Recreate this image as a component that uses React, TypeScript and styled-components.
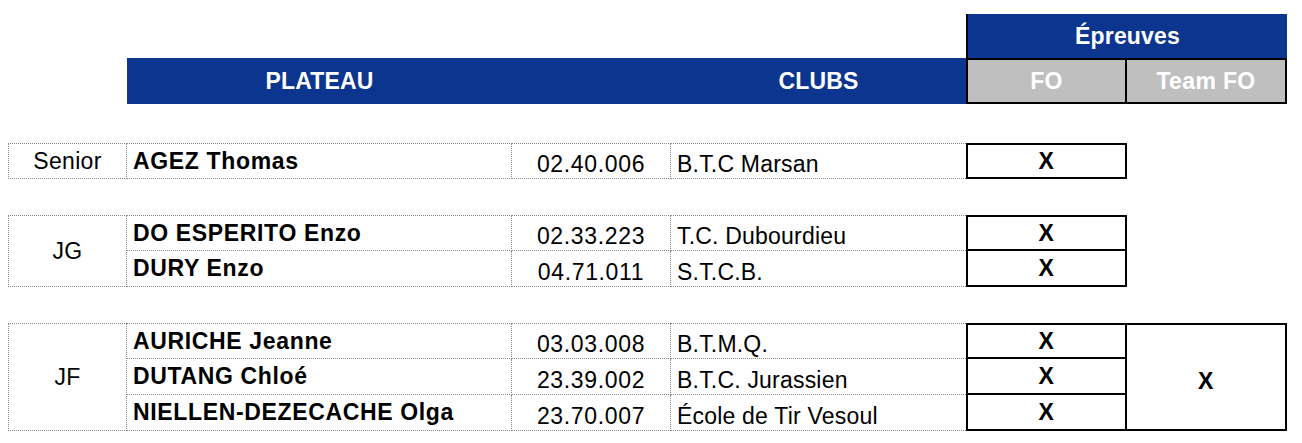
import React from "react";
import styled, { createGlobalStyle, css } from "styled-components";

const COLS = "119px 385px 159px 295px 161px 160px";
const BLUE = "#0c3590";
const DOT = "1px dotted #8a8a8a";
const BLACK = "2px solid #000";

const GlobalStyle = createGlobalStyle`
  html, body { margin: 0; padding: 0; background: #fff; }
  body {
    font-family: "Liberation Sans", Arial, Helvetica, sans-serif;
    font-size: 23px;
    color: #000;
  }
  * { box-sizing: border-box; }
`;

const Page = styled.div`
  width: 1302px;
  height: 443px;
  padding: 14px 0 0 8px;
  overflow: hidden;
`;

const HeaderGrid = styled.div`
  display: grid;
  grid-template-columns: ${COLS};
  grid-template-rows: 44px 46px;
`;

const Cell = styled.div`
  display: flex;
  align-items: center;
  min-width: 0;
  white-space: nowrap;
`;

const BlueHead = styled(Cell)<{ $col: string; $row: number }>`
  grid-column: ${(p) => p.$col};
  grid-row: ${(p) => p.$row};
  background: ${BLUE};
  color: #fff;
  font-weight: 700;
  letter-spacing: 0.15px;
  justify-content: center;
`;

const EventsHead = styled(BlueHead)`
  border-left: ${BLACK};
`;

const GreyHead = styled(Cell)<{ $col: number; $first?: boolean }>`
  grid-column: ${(p) => p.$col};
  grid-row: 2;
  background: #bfbfbf;
  color: #fff;
  font-weight: 700;
  letter-spacing: 0.35px;
  justify-content: center;
  border-top: ${BLACK};
  border-right: ${BLACK};
  border-bottom: ${BLACK};
  border-left: ${(p) => (p.$first ? BLACK : "0")};
`;

const Groups = styled.div`
  display: flex;
  flex-direction: column;
  gap: 36px;
  margin-top: 39px;
`;

const GroupGrid = styled.div`
  display: grid;
  grid-template-columns: ${COLS};
  grid-auto-rows: 36px;
  letter-spacing: 0.65px;
`;

const LabelCell = styled(Cell)<{ $span: number }>`
  grid-column: 1;
  grid-row: 1 / span ${(p) => p.$span};
  justify-content: center;
  letter-spacing: 0.3px;
  border: ${DOT};
`;

const rowLines = css<{ $first: boolean }>`
  border-bottom: ${DOT};
  ${(p) => p.$first && `border-top: ${DOT};`}
`;

const NameCell = styled(Cell)<{ $first: boolean }>`
  grid-column: 2;
  font-weight: 700;
  padding-left: 6px;
  border-right: ${DOT};
  ${rowLines}
`;

const NumberCell = styled(Cell)<{ $first: boolean }>`
  grid-column: 3;
  justify-content: center;
  padding-top: 7px;
  border-right: ${DOT};
  ${rowLines}
`;

const ClubCell = styled(Cell)<{ $first: boolean }>`
  grid-column: 4;
  padding-left: 6px;
  padding-top: 7px;
  letter-spacing: 0.2px;
  ${rowLines}
`;

const MarkCell = styled(Cell)<{ $first: boolean }>`
  grid-column: 5;
  justify-content: center;
  font-weight: 700;
  border-left: ${BLACK};
  border-right: ${BLACK};
  border-bottom: ${BLACK};
  ${(p) => p.$first && `border-top: ${BLACK};`}
`;

const TeamCell = styled(Cell)<{ $span: number }>`
  grid-column: 6;
  grid-row: 1 / span ${(p) => p.$span};
  justify-content: center;
  font-weight: 700;
  padding-top: 8px;
  border-top: ${BLACK};
  border-right: ${BLACK};
  border-bottom: ${BLACK};
`;

type Player = { name: string; num: string; club: string };
type Group = { label: string; team?: boolean; players: Player[] };

const groups: Group[] = [
  {
    label: "Senior",
    players: [{ name: "AGEZ Thomas", num: "02.40.006", club: "B.T.C Marsan" }],
  },
  {
    label: "JG",
    players: [
      { name: "DO ESPERITO Enzo", num: "02.33.223", club: "T.C. Dubourdieu" },
      { name: "DURY Enzo", num: "04.71.011", club: "S.T.C.B." },
    ],
  },
  {
    label: "JF",
    team: true,
    players: [
      { name: "AURICHE Jeanne", num: "03.03.008", club: "B.T.M.Q." },
      { name: "DUTANG Chloé", num: "23.39.002", club: "B.T.C. Jurassien" },
      { name: "NIELLEN-DEZECACHE Olga", num: "23.70.007", club: "École de Tir Vesoul" },
    ],
  },
];

export default function App() {
  return (
    <>
      <GlobalStyle />
      <Page>
        <HeaderGrid>
          <EventsHead $col="5 / span 2" $row={1}>Épreuves</EventsHead>
          <BlueHead $col="2" $row={2}>PLATEAU</BlueHead>
          <BlueHead $col="3" $row={2} />
          <BlueHead $col="4" $row={2}>CLUBS</BlueHead>
          <GreyHead $col={5} $first>FO</GreyHead>
          <GreyHead $col={6}>Team FO</GreyHead>
        </HeaderGrid>
        <Groups>
          {groups.map((g) => (
            <GroupGrid key={g.label}>
              <LabelCell $span={g.players.length}>{g.label}</LabelCell>
              {g.players.map((p, i) => (
                <React.Fragment key={p.name}>
                  <NameCell $first={i === 0} style={{ gridRow: i + 1 }}>{p.name}</NameCell>
                  <NumberCell $first={i === 0} style={{ gridRow: i + 1 }}>{p.num}</NumberCell>
                  <ClubCell $first={i === 0} style={{ gridRow: i + 1 }}>{p.club}</ClubCell>
                  <MarkCell $first={i === 0} style={{ gridRow: i + 1 }}>X</MarkCell>
                </React.Fragment>
              ))}
              {g.team && <TeamCell $span={g.players.length}>X</TeamCell>}
            </GroupGrid>
          ))}
        </Groups>
      </Page>
    </>
  );
}
